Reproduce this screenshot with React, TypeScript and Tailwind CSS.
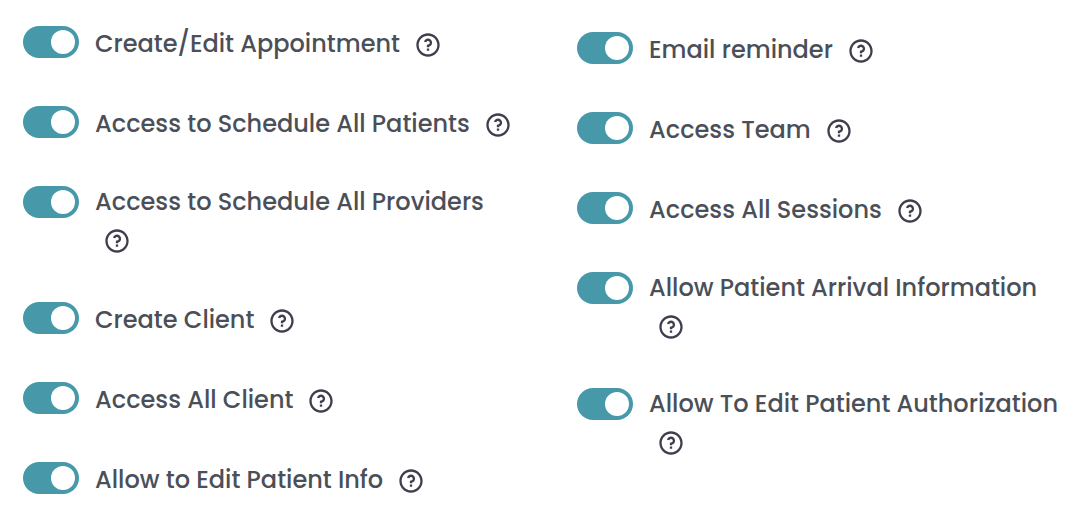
import { useId, useState } from "react";
import { RiQuestionLine } from "react-icons/ri";

const scheduling = [
  "Create/Edit Appointment",
  "Access to Schedule All Patients",
  "Access to Schedule All Providers",
  "Create Client",
  "Access All Client",
  "Allow to Edit Patient Info",
];

const communication = [
  "Email reminder",
  "Access Team",
  "Access All Sessions",
  "Allow Patient Arrival Information",
  "Allow To Edit Patient Authorization",
];

function PermissionRow({ label }: { label: string }) {
  const id = useId();
  const [enabled, setEnabled] = useState(true);

  return (
    <li className="flex items-start gap-4">
      <input
        id={id}
        type="checkbox"
        role="switch"
        checked={enabled}
        onChange={(event) => setEnabled(event.target.checked)}
        className="mt-0.5 flex h-8 w-14 shrink-0 cursor-pointer appearance-none items-center rounded-full bg-gray-300 px-1 before:size-6 before:rounded-full before:bg-white before:transition-transform checked:bg-[#4799aa] checked:before:translate-x-6"
      />
      <div className="flex min-w-0 flex-wrap items-center">
        <label htmlFor={id} className="cursor-pointer pr-1.5">
          {label}
        </label>
        <button
          type="button"
          aria-label={`Help: ${label}`}
          className="ml-2 flex h-10 cursor-pointer items-center pt-0.5 text-[#3f3e4d]"
        >
          <RiQuestionLine className="size-7" aria-hidden="true" />
        </button>
      </div>
    </li>
  );
}

function PermissionList({ items }: { items: string[] }) {
  return (
    <ul className="flex flex-col gap-10">
      {items.map((item) => (
        <PermissionRow key={item} label={item} />
      ))}
    </ul>
  );
}

export default function App() {
  return (
    <main className="min-h-screen bg-white pt-6 pr-[9px] pl-[23px] font-[Poppins,Inter,sans-serif] text-[24px] leading-9 font-medium text-[#4b4f58]">
      <div className="grid grid-cols-2 items-start gap-x-[58px]">
        <PermissionList items={scheduling} />
        <div className="pt-1.5">
          <PermissionList items={communication} />
        </div>
      </div>
    </main>
  );
}
